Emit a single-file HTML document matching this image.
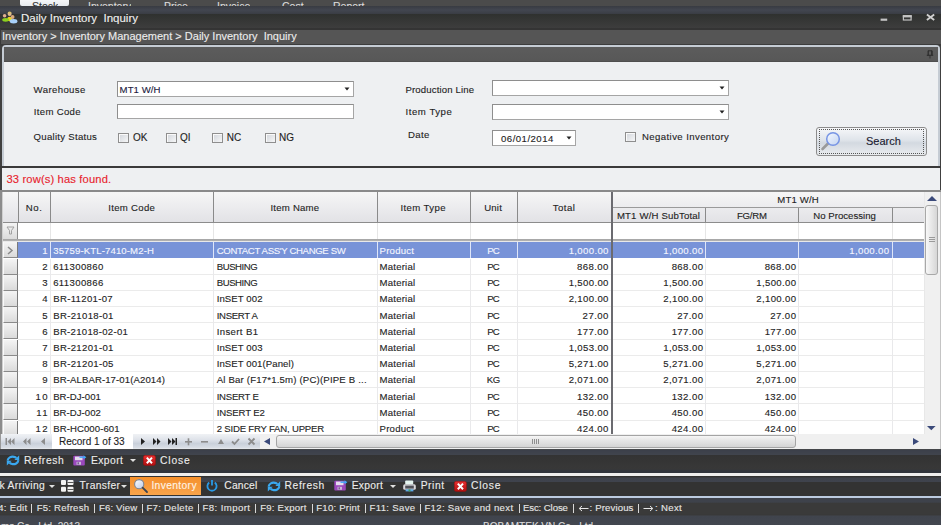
<!DOCTYPE html><html><head><meta charset="utf-8"><style>
*{margin:0;padding:0;box-sizing:border-box}
html,body{width:941px;height:525px;overflow:hidden;background:#404040;font-family:"Liberation Sans", sans-serif;}
.a{position:absolute;white-space:pre;}
.t{position:absolute;white-space:pre;line-height:1;-webkit-text-stroke:0.12px currentColor;}
</style></head><body><div class="a" style="left:0px;top:0px;width:941px;height:7px;background:#4b4b4b"></div>
<div class="a" style="left:20px;top:0px;width:49px;height:6px;background:linear-gradient(#f4f6f8,#e6eaee);border-radius:0 0 2px 2px"></div>
<div class="a" style="left:32px;top:0;height:6px;overflow:hidden"><div class="t" style="position:relative;top:1.3px;font-size:10.5px;color:#333">Stock</div></div>
<div class="a" style="left:88px;top:0;height:6px;overflow:hidden"><div class="t" style="position:relative;top:1.3px;font-size:10.5px;color:#ddd">Inventory</div></div>
<div class="a" style="left:164px;top:0;height:6px;overflow:hidden"><div class="t" style="position:relative;top:1.3px;font-size:10.5px;color:#ddd">Price</div></div>
<div class="a" style="left:217px;top:0;height:6px;overflow:hidden"><div class="t" style="position:relative;top:1.3px;font-size:10.5px;color:#ddd">Invoice</div></div>
<div class="a" style="left:282px;top:0;height:6px;overflow:hidden"><div class="t" style="position:relative;top:1.3px;font-size:10.5px;color:#ddd">Cost</div></div>
<div class="a" style="left:333px;top:0;height:6px;overflow:hidden"><div class="t" style="position:relative;top:1.3px;font-size:10.5px;color:#ddd">Report</div></div>
<div class="a" style="left:0px;top:6px;width:941px;height:8px;background:linear-gradient(#383b42,#424650 50%,#3a3d44)"></div>
<div class="a" style="left:0px;top:14px;width:941px;height:14px;background:linear-gradient(#2f312f,#3d3d3d)"></div>
<div class="a" style="left:0px;top:28px;width:941px;height:1.5px;background:#343434"></div>
<div class="t" style="left:21px;top:13px;font-size:11.5px;color:#f0f0f0;">Daily Inventory  Inquiry</div>
<svg class="a" style="left:0;top:8px" width="20" height="20" viewBox="0 0 20 20"><ellipse cx="9.8" cy="11" rx="2.6" ry="2.2" fill="#e8d020"/><circle cx="9.6" cy="6" r="2" fill="#e0b890"/><path d="M7.6 5.5a2 2 0 0 1 4 0z" fill="#d8c070"/><ellipse cx="5.6" cy="11.8" rx="3.4" ry="1.9" fill="#8cd020"/><circle cx="4.6" cy="7.8" r="1.8" fill="#e0b090"/><ellipse cx="13.6" cy="13.3" rx="3.8" ry="2.2" fill="#a8d0f8"/><circle cx="12.6" cy="9" r="1.9" fill="#d8a880"/></svg>
<svg class="a" style="left:876px;top:13px" width="65" height="14" viewBox="0 0 65 14"><rect x="4.6" y="5.6" width="6.6" height="2.2" fill="#c4c4c4"/><rect x="27.4" y="2.8" width="7.7" height="4.2" fill="none" stroke="#c4c4c4" stroke-width="1.2"/><rect x="26.8" y="2.2" width="8.9" height="2.2" fill="#c4c4c4"/><path d="M50.9 1.6 L58.2 6.9 M58.2 1.6 L50.9 6.9" stroke="#d0d0d0" stroke-width="1.9"/></svg>
<div class="a" style="left:0px;top:29.5px;width:941px;height:15px;background:#555555"></div>
<div class="a" style="left:0px;top:29px;width:1px;height:16px;background:#3a3a3a"></div>
<div class="a" style="left:0px;top:44px;width:941px;height:2px;background:#3c3c3c"></div>
<div class="t" style="left:2px;top:31px;font-size:11px;color:#ececec;">Inventory &gt; Inventory Management &gt; Daily Inventory  Inquiry</div>
<div class="a" style="left:2px;top:45.3px;width:938px;height:123px;background:#eef0f2;border:2px solid #c5ccd4;border-bottom:none;border-radius:4px 4px 0 0"></div>
<div class="a" style="left:4px;top:47.3px;width:934px;height:14.7px;background:linear-gradient(#5c5c5c,#585858 90%,#4a4a4a)"></div>
<svg class="a" style="left:926px;top:50px" width="8" height="9" viewBox="0 0 8 9"><path d="M2 0.8h4v4.2" fill="none" stroke="#2e2e2e" stroke-width="1"/><path d="M2.2 0.8v4.4" stroke="#2e2e2e" stroke-width="1.3"/><path d="M5.8 0.8v4.4" stroke="#2e2e2e" stroke-width="1.3"/><path d="M0.8 5.3h6.4" stroke="#2e2e2e" stroke-width="1.1"/><path d="M4 5.5v3" stroke="#2e2e2e" stroke-width="0.9"/></svg>
<div class="a" style="left:0px;top:166px;width:941px;height:2px;background:#3a3a3a"></div>
<div class="t" style="left:33.6px;top:84.5px;font-size:9.6px;color:#1e1e1e;letter-spacing:0.379px;">Warehouse</div>
<div class="t" style="left:33.8px;top:107px;font-size:9.6px;color:#1e1e1e;letter-spacing:0.310px;">Item Code</div>
<div class="t" style="left:33.6px;top:132.2px;font-size:9.6px;color:#1e1e1e;letter-spacing:0.275px;">Quality Status</div>
<div class="t" style="left:405.4px;top:84.5px;font-size:9.6px;color:#1e1e1e;letter-spacing:0.148px;">Production Line</div>
<div class="t" style="left:405.6px;top:107px;font-size:9.6px;color:#1e1e1e;letter-spacing:0.527px;">Item Type</div>
<div class="t" style="left:407.9px;top:130.4px;font-size:9.6px;color:#1e1e1e;letter-spacing:0.424px;">Date</div>
<div class="a" style="left:117px;top:81px;width:237px;height:16px;background:#fff;border:1px solid #a5a5a5;border-top-color:#8e8e8e;border-left-color:#8e8e8e"></div>
<div class="t" style="left:119.6px;top:84.8px;font-size:9.6px;color:#1a1a40;letter-spacing:0.071px;">MT1 W/H</div>
<svg class="a" style="left:344px;top:87px" width="6" height="4" viewBox="0 0 6 4"><path d="M0.5 0.5h5L3 3.5z" fill="#222"/></svg>
<div class="a" style="left:117px;top:104px;width:237px;height:15px;background:#fff;border:1px solid #a5a5a5;border-top-color:#8e8e8e;border-left-color:#8e8e8e"></div>
<div class="a" style="left:492px;top:80px;width:237px;height:16px;background:#fff;border:1px solid #a5a5a5;border-top-color:#8e8e8e;border-left-color:#8e8e8e"></div>
<svg class="a" style="left:719px;top:86px" width="6" height="4" viewBox="0 0 6 4"><path d="M0.5 0.5h5L3 3.5z" fill="#222"/></svg>
<div class="a" style="left:492px;top:104px;width:237px;height:16px;background:#fff;border:1px solid #a5a5a5;border-top-color:#8e8e8e;border-left-color:#8e8e8e"></div>
<svg class="a" style="left:719px;top:110px" width="6" height="4" viewBox="0 0 6 4"><path d="M0.5 0.5h5L3 3.5z" fill="#222"/></svg>
<div class="a" style="left:492px;top:130px;width:84px;height:16px;background:#fff;border:1px solid #a5a5a5;border-top-color:#8e8e8e;border-left-color:#8e8e8e"></div>
<svg class="a" style="left:566px;top:136px" width="6" height="4" viewBox="0 0 6 4"><path d="M0.5 0.5h5L3 3.5z" fill="#222"/></svg>
<div class="t" style="left:501px;top:133.6px;font-size:9.6px;color:#1e1e1e;letter-spacing:0.480px;">06/01/2014</div>
<div class="a" style="left:118px;top:133px;width:11px;height:9.5px;background:linear-gradient(135deg,#d0d4da,#f6f7f8);border:1px solid #8e8e8e;box-shadow:inset 1px 1px 0 #fafafa"></div>
<div class="t" style="left:132.9px;top:133.2px;font-size:10px;color:#1e1e1e;">OK</div>
<div class="a" style="left:165.7px;top:133.2px;width:11px;height:9.5px;background:linear-gradient(135deg,#d0d4da,#f6f7f8);border:1px solid #8e8e8e;box-shadow:inset 1px 1px 0 #fafafa"></div>
<div class="t" style="left:180.1px;top:133.39999999999998px;font-size:10px;color:#1e1e1e;">QI</div>
<div class="a" style="left:212.1px;top:133.2px;width:11px;height:9.5px;background:linear-gradient(135deg,#d0d4da,#f6f7f8);border:1px solid #8e8e8e;box-shadow:inset 1px 1px 0 #fafafa"></div>
<div class="t" style="left:226.7px;top:133.39999999999998px;font-size:10px;color:#1e1e1e;">NC</div>
<div class="a" style="left:264.5px;top:133.2px;width:11px;height:9.5px;background:linear-gradient(135deg,#d0d4da,#f6f7f8);border:1px solid #8e8e8e;box-shadow:inset 1px 1px 0 #fafafa"></div>
<div class="t" style="left:279px;top:133.39999999999998px;font-size:10px;color:#1e1e1e;">NG</div>
<div class="a" style="left:625px;top:132px;width:11px;height:9.5px;background:linear-gradient(135deg,#d0d4da,#f6f7f8);border:1px solid #8e8e8e;box-shadow:inset 1px 1px 0 #fafafa"></div>
<div class="t" style="left:642px;top:132px;font-size:9.6px;color:#1e1e1e;letter-spacing:0.400px;">Negative Inventory</div>
<div class="a" style="left:816px;top:127px;width:111px;height:29px;background:linear-gradient(#f6f7f9 0%,#dfe4ea 45%,#d3d9e0 55%,#e9ecef 100%);border:1px solid #8c8c8c;border-radius:3px"></div>
<div class="a" style="left:819px;top:129px;width:105px;height:25px;border:1px dotted #555"></div>
<svg class="a" style="left:818px;top:130px" width="26" height="22" viewBox="0 0 26 22"><defs><linearGradient id="sg" x1="0" y1="0" x2="1" y2="1"><stop offset="0" stop-color="#f4f8ff"/><stop offset="1" stop-color="#c4d4f0"/></linearGradient></defs><path d="M10.5 13 L4.5 19" stroke="#9a9a9a" stroke-width="2.6" stroke-linecap="round"/><circle cx="15" cy="9" r="6.3" fill="url(#sg)" stroke="#7794e4" stroke-width="1.5"/></svg>
<div class="t" style="left:866px;top:136px;font-size:11px;color:#1a1a30;">Search</div>
<div class="a" style="left:2px;top:168px;width:938px;height:23px;background:#eef0f2"></div>
<div class="t" style="left:6.5px;top:174px;font-size:11.2px;color:#e8222c;letter-spacing:0.138px;">33 row(s) has found.</div>
<div class="a" style="left:0px;top:191px;width:941px;height:259px;background:#fff"></div>
<div class="a" style="left:0px;top:191px;width:1.5px;height:243px;background:#8c8c8c"></div>
<div class="a" style="left:1.5px;top:191px;width:1.5px;height:243px;background:#cfcfcf"></div>
<div class="a" style="left:0px;top:190px;width:941px;height:2px;background:#8a8a8a"></div>
<div class="a" style="left:3px;top:192px;width:921px;height:30px;background:linear-gradient(#f6f6f6,#e2e2e6)"></div>
<div class="a" style="left:3px;top:222px;width:921px;height:1px;background:#8c8c8c"></div>
<div class="a" style="left:17.5px;top:192px;width:1px;height:30px;background:#8a8a8a"></div>
<div class="a" style="left:49.5px;top:192px;width:1px;height:30px;background:#8a8a8a"></div>
<div class="a" style="left:213.0px;top:192px;width:1px;height:30px;background:#8a8a8a"></div>
<div class="a" style="left:376.5px;top:192px;width:1px;height:30px;background:#8a8a8a"></div>
<div class="a" style="left:470.0px;top:192px;width:1px;height:30px;background:#8a8a8a"></div>
<div class="a" style="left:516.5px;top:192px;width:1px;height:30px;background:#8a8a8a"></div>
<div class="a" style="left:613px;top:207px;width:311px;height:1px;background:#9a9a9a"></div>
<div class="a" style="left:704.8px;top:208px;width:1px;height:14px;background:#8a8a8a"></div>
<div class="a" style="left:798.0px;top:208px;width:1px;height:14px;background:#8a8a8a"></div>
<div class="a" style="left:891.9px;top:208px;width:1px;height:14px;background:#8a8a8a"></div>
<div class="t" style="left:-65.87px;width:200px;text-align:center;top:203.2px;font-size:9.6px;color:#1e1e1e;letter-spacing:0.668px">No.</div>
<div class="t" style="left:31.74px;width:200px;text-align:center;top:203.2px;font-size:9.6px;color:#1e1e1e;letter-spacing:0.285px">Item Code</div>
<div class="t" style="left:194.91px;width:200px;text-align:center;top:203.2px;font-size:9.6px;color:#1e1e1e;letter-spacing:0.228px">Item Name</div>
<div class="t" style="left:323.20px;width:200px;text-align:center;top:203.2px;font-size:9.6px;color:#1e1e1e;letter-spacing:0.402px">Item Type</div>
<div class="t" style="left:393.10px;width:200px;text-align:center;top:203.2px;font-size:9.6px;color:#1e1e1e;letter-spacing:0.202px">Unit</div>
<div class="t" style="left:464.03px;width:200px;text-align:center;top:203.2px;font-size:9.6px;color:#1e1e1e;letter-spacing:0.467px">Total</div>
<div class="t" style="left:698.08px;width:200px;text-align:center;top:195.3px;font-size:9.6px;color:#1e1e1e;letter-spacing:0.154px">MT1 W/H</div>
<div class="t" style="left:558.48px;width:200px;text-align:center;top:210.7px;font-size:9.6px;color:#1e1e1e;letter-spacing:0.162px">MT1 W/H SubTotal</div>
<div class="t" style="left:651.89px;width:200px;text-align:center;top:210.7px;font-size:9.6px;color:#1e1e1e;letter-spacing:-0.229px">FG/RM</div>
<div class="t" style="left:744.61px;width:200px;text-align:center;top:210.7px;font-size:9.6px;color:#1e1e1e;letter-spacing:0.029px">No Processing</div>
<div class="a" style="left:3px;top:223px;width:15px;height:16px;background:linear-gradient(#f4f4f4,#dcdcdc);border-right:1px solid #8a8a8a"></div>
<div class="a" style="left:49.5px;top:223px;width:1px;height:16px;background:#e6e6e6"></div>
<div class="a" style="left:213.0px;top:223px;width:1px;height:16px;background:#e6e6e6"></div>
<div class="a" style="left:376.5px;top:223px;width:1px;height:16px;background:#e6e6e6"></div>
<div class="a" style="left:470.0px;top:223px;width:1px;height:16px;background:#e6e6e6"></div>
<div class="a" style="left:516.5px;top:223px;width:1px;height:16px;background:#e6e6e6"></div>
<div class="a" style="left:704.8px;top:223px;width:1px;height:16px;background:#e6e6e6"></div>
<div class="a" style="left:798.0px;top:223px;width:1px;height:16px;background:#e6e6e6"></div>
<div class="a" style="left:891.9px;top:223px;width:1px;height:16px;background:#e6e6e6"></div>
<svg class="a" style="left:6px;top:226px" width="9" height="9" viewBox="0 0 9 9"><path d="M1 1h7L5.5 4.5V8h-2V4.5z" fill="none" stroke="#9a9a9a" stroke-width="0.9"/></svg>
<div class="a" style="left:3px;top:239px;width:921px;height:3.3px;background:linear-gradient(#a4a4a4,#b4b4b4 70%,#e6e6e6 75%,#eeeeee)"></div>
<div class="a" style="left:0;top:242px;width:924px;height:192px;overflow:hidden">
<div class="a" style="left:18px;top:0.3px;width:906px;height:16.2px;background:#7893d8"></div>
<div class="a" style="left:3px;top:0.3px;width:15px;height:16.2px;background:linear-gradient(#f4f4f4,#dadada);border-bottom:1px solid #8a8a8a;border-right:1.3px solid #7a7a7a;border-left:1px solid #fafafa"></div>
<svg class="a" style="left:6px;top:4.3px" width="8" height="9" viewBox="0 0 8 9"><path d="M2 1l4 3.5L2 8" fill="none" stroke="#8a8a8a" stroke-width="1.5"/></svg>
<div class="a" style="left:49.5px;top:0.3px;width:1px;height:16.2px;background:#dfe6f8"></div>
<div class="a" style="left:213.0px;top:0.3px;width:1px;height:16.2px;background:#dfe6f8"></div>
<div class="a" style="left:376.5px;top:0.3px;width:1px;height:16.2px;background:#dfe6f8"></div>
<div class="a" style="left:470.0px;top:0.3px;width:1px;height:16.2px;background:#dfe6f8"></div>
<div class="a" style="left:516.5px;top:0.3px;width:1px;height:16.2px;background:#dfe6f8"></div>
<div class="a" style="left:704.8px;top:0.3px;width:1px;height:16.2px;background:#dfe6f8"></div>
<div class="a" style="left:798.0px;top:0.3px;width:1px;height:16.2px;background:#dfe6f8"></div>
<div class="a" style="left:891.9px;top:0.3px;width:1px;height:16.2px;background:#dfe6f8"></div>
<div class="t" style="left:-101.50px;width:150px;text-align:right;top:3.7px;font-size:9.6px;color:#f4f6ff;letter-spacing:1.000px">1</div>
<div class="t" style="left:53.2px;top:3.7px;font-size:9.6px;color:#f4f6ff;letter-spacing:0.115px">35759-KTL-7410-M2-H</div>
<div class="t" style="left:216.7px;top:3.7px;font-size:9.6px;color:#f4f6ff;letter-spacing:-0.342px">CONTACT ASS&#39;Y CHANGE SW</div>
<div class="t" style="left:379.6px;top:3.7px;font-size:9.6px;color:#f4f6ff;letter-spacing:0.215px">Product</div>
<div class="t" style="left:443.05px;width:100px;text-align:center;top:3.7px;font-size:9.6px;color:#f4f6ff;letter-spacing:-0.899px">PC</div>
<div class="t" style="left:458.74px;width:150px;text-align:right;top:3.7px;font-size:9.6px;color:#f4f6ff;letter-spacing:0.336px">1,000.00</div>
<div class="t" style="left:553.34px;width:150px;text-align:right;top:3.7px;font-size:9.6px;color:#f4f6ff;letter-spacing:0.336px">1,000.00</div>
<div class="t" style="left:646.00px;width:150px;text-align:right;top:3.7px;font-size:9.6px;color:#f4f6ff;letter-spacing:0.000px"></div>
<div class="t" style="left:739.34px;width:150px;text-align:right;top:3.7px;font-size:9.6px;color:#f4f6ff;letter-spacing:0.336px">1,000.00</div>
<div class="a" style="left:3px;top:16.5px;width:15px;height:16.2px;background:linear-gradient(#f4f4f4,#dadada);border-bottom:1px solid #8a8a8a;border-right:1.3px solid #7a7a7a;border-left:1px solid #fafafa"></div>
<div class="a" style="left:18px;top:31.700000000000003px;width:906px;height:1px;background:#ebebeb"></div>
<div class="a" style="left:49.5px;top:16.5px;width:1px;height:16.2px;background:#e9e9eb"></div>
<div class="a" style="left:213.0px;top:16.5px;width:1px;height:16.2px;background:#e9e9eb"></div>
<div class="a" style="left:376.5px;top:16.5px;width:1px;height:16.2px;background:#e9e9eb"></div>
<div class="a" style="left:470.0px;top:16.5px;width:1px;height:16.2px;background:#e9e9eb"></div>
<div class="a" style="left:516.5px;top:16.5px;width:1px;height:16.2px;background:#e9e9eb"></div>
<div class="a" style="left:704.8px;top:16.5px;width:1px;height:16.2px;background:#e9e9eb"></div>
<div class="a" style="left:798.0px;top:16.5px;width:1px;height:16.2px;background:#e9e9eb"></div>
<div class="a" style="left:891.9px;top:16.5px;width:1px;height:16.2px;background:#e9e9eb"></div>
<div class="t" style="left:-101.50px;width:150px;text-align:right;top:19.9px;font-size:9.6px;color:#1e1e1e;letter-spacing:1.000px">2</div>
<div class="t" style="left:53.2px;top:19.9px;font-size:9.6px;color:#1e1e1e;letter-spacing:0.347px">611300860</div>
<div class="t" style="left:216.7px;top:19.9px;font-size:9.6px;color:#1e1e1e;letter-spacing:-0.441px">BUSHING</div>
<div class="t" style="left:379.6px;top:19.9px;font-size:9.6px;color:#1e1e1e;letter-spacing:0.194px">Material</div>
<div class="t" style="left:443.05px;width:100px;text-align:center;top:19.9px;font-size:9.6px;color:#1e1e1e;letter-spacing:-0.899px">PC</div>
<div class="t" style="left:458.80px;width:150px;text-align:right;top:19.9px;font-size:9.6px;color:#1e1e1e;letter-spacing:0.403px">868.00</div>
<div class="t" style="left:553.40px;width:150px;text-align:right;top:19.9px;font-size:9.6px;color:#1e1e1e;letter-spacing:0.403px">868.00</div>
<div class="t" style="left:646.40px;width:150px;text-align:right;top:19.9px;font-size:9.6px;color:#1e1e1e;letter-spacing:0.403px">868.00</div>
<div class="t" style="left:739.00px;width:150px;text-align:right;top:19.9px;font-size:9.6px;color:#1e1e1e;letter-spacing:0.000px"></div>
<div class="a" style="left:3px;top:32.7px;width:15px;height:16.2px;background:linear-gradient(#f4f4f4,#dadada);border-bottom:1px solid #8a8a8a;border-right:1.3px solid #7a7a7a;border-left:1px solid #fafafa"></div>
<div class="a" style="left:18px;top:47.900000000000006px;width:906px;height:1px;background:#ebebeb"></div>
<div class="a" style="left:49.5px;top:32.7px;width:1px;height:16.2px;background:#e9e9eb"></div>
<div class="a" style="left:213.0px;top:32.7px;width:1px;height:16.2px;background:#e9e9eb"></div>
<div class="a" style="left:376.5px;top:32.7px;width:1px;height:16.2px;background:#e9e9eb"></div>
<div class="a" style="left:470.0px;top:32.7px;width:1px;height:16.2px;background:#e9e9eb"></div>
<div class="a" style="left:516.5px;top:32.7px;width:1px;height:16.2px;background:#e9e9eb"></div>
<div class="a" style="left:704.8px;top:32.7px;width:1px;height:16.2px;background:#e9e9eb"></div>
<div class="a" style="left:798.0px;top:32.7px;width:1px;height:16.2px;background:#e9e9eb"></div>
<div class="a" style="left:891.9px;top:32.7px;width:1px;height:16.2px;background:#e9e9eb"></div>
<div class="t" style="left:-101.50px;width:150px;text-align:right;top:36.1px;font-size:9.6px;color:#1e1e1e;letter-spacing:1.000px">3</div>
<div class="t" style="left:53.2px;top:36.1px;font-size:9.6px;color:#1e1e1e;letter-spacing:0.347px">611300866</div>
<div class="t" style="left:216.7px;top:36.1px;font-size:9.6px;color:#1e1e1e;letter-spacing:-0.441px">BUSHING</div>
<div class="t" style="left:379.6px;top:36.1px;font-size:9.6px;color:#1e1e1e;letter-spacing:0.194px">Material</div>
<div class="t" style="left:443.05px;width:100px;text-align:center;top:36.1px;font-size:9.6px;color:#1e1e1e;letter-spacing:-0.899px">PC</div>
<div class="t" style="left:458.74px;width:150px;text-align:right;top:36.1px;font-size:9.6px;color:#1e1e1e;letter-spacing:0.336px">1,500.00</div>
<div class="t" style="left:553.34px;width:150px;text-align:right;top:36.1px;font-size:9.6px;color:#1e1e1e;letter-spacing:0.336px">1,500.00</div>
<div class="t" style="left:646.34px;width:150px;text-align:right;top:36.1px;font-size:9.6px;color:#1e1e1e;letter-spacing:0.336px">1,500.00</div>
<div class="t" style="left:739.00px;width:150px;text-align:right;top:36.1px;font-size:9.6px;color:#1e1e1e;letter-spacing:0.000px"></div>
<div class="a" style="left:3px;top:48.9px;width:15px;height:16.2px;background:linear-gradient(#f4f4f4,#dadada);border-bottom:1px solid #8a8a8a;border-right:1.3px solid #7a7a7a;border-left:1px solid #fafafa"></div>
<div class="a" style="left:18px;top:64.1px;width:906px;height:1px;background:#ebebeb"></div>
<div class="a" style="left:49.5px;top:48.9px;width:1px;height:16.2px;background:#e9e9eb"></div>
<div class="a" style="left:213.0px;top:48.9px;width:1px;height:16.2px;background:#e9e9eb"></div>
<div class="a" style="left:376.5px;top:48.9px;width:1px;height:16.2px;background:#e9e9eb"></div>
<div class="a" style="left:470.0px;top:48.9px;width:1px;height:16.2px;background:#e9e9eb"></div>
<div class="a" style="left:516.5px;top:48.9px;width:1px;height:16.2px;background:#e9e9eb"></div>
<div class="a" style="left:704.8px;top:48.9px;width:1px;height:16.2px;background:#e9e9eb"></div>
<div class="a" style="left:798.0px;top:48.9px;width:1px;height:16.2px;background:#e9e9eb"></div>
<div class="a" style="left:891.9px;top:48.9px;width:1px;height:16.2px;background:#e9e9eb"></div>
<div class="t" style="left:-102.50px;width:150px;text-align:right;top:52.3px;font-size:9.6px;color:#1e1e1e;letter-spacing:0.000px">4</div>
<div class="t" style="left:53.2px;top:52.3px;font-size:9.6px;color:#1e1e1e;letter-spacing:0.316px">BR-11201-07</div>
<div class="t" style="left:216.7px;top:52.3px;font-size:9.6px;color:#1e1e1e;letter-spacing:0.088px">InSET 002</div>
<div class="t" style="left:379.6px;top:52.3px;font-size:9.6px;color:#1e1e1e;letter-spacing:0.194px">Material</div>
<div class="t" style="left:443.05px;width:100px;text-align:center;top:52.3px;font-size:9.6px;color:#1e1e1e;letter-spacing:-0.899px">PC</div>
<div class="t" style="left:458.74px;width:150px;text-align:right;top:52.3px;font-size:9.6px;color:#1e1e1e;letter-spacing:0.336px">2,100.00</div>
<div class="t" style="left:553.34px;width:150px;text-align:right;top:52.3px;font-size:9.6px;color:#1e1e1e;letter-spacing:0.336px">2,100.00</div>
<div class="t" style="left:646.34px;width:150px;text-align:right;top:52.3px;font-size:9.6px;color:#1e1e1e;letter-spacing:0.336px">2,100.00</div>
<div class="t" style="left:739.00px;width:150px;text-align:right;top:52.3px;font-size:9.6px;color:#1e1e1e;letter-spacing:0.000px"></div>
<div class="a" style="left:3px;top:65.1px;width:15px;height:16.2px;background:linear-gradient(#f4f4f4,#dadada);border-bottom:1px solid #8a8a8a;border-right:1.3px solid #7a7a7a;border-left:1px solid #fafafa"></div>
<div class="a" style="left:18px;top:80.3px;width:906px;height:1px;background:#ebebeb"></div>
<div class="a" style="left:49.5px;top:65.1px;width:1px;height:16.2px;background:#e9e9eb"></div>
<div class="a" style="left:213.0px;top:65.1px;width:1px;height:16.2px;background:#e9e9eb"></div>
<div class="a" style="left:376.5px;top:65.1px;width:1px;height:16.2px;background:#e9e9eb"></div>
<div class="a" style="left:470.0px;top:65.1px;width:1px;height:16.2px;background:#e9e9eb"></div>
<div class="a" style="left:516.5px;top:65.1px;width:1px;height:16.2px;background:#e9e9eb"></div>
<div class="a" style="left:704.8px;top:65.1px;width:1px;height:16.2px;background:#e9e9eb"></div>
<div class="a" style="left:798.0px;top:65.1px;width:1px;height:16.2px;background:#e9e9eb"></div>
<div class="a" style="left:891.9px;top:65.1px;width:1px;height:16.2px;background:#e9e9eb"></div>
<div class="t" style="left:-101.50px;width:150px;text-align:right;top:68.5px;font-size:9.6px;color:#1e1e1e;letter-spacing:1.000px">5</div>
<div class="t" style="left:53.2px;top:68.5px;font-size:9.6px;color:#1e1e1e;letter-spacing:0.319px">BR-21018-01</div>
<div class="t" style="left:216.7px;top:68.5px;font-size:9.6px;color:#1e1e1e;letter-spacing:-0.310px">INSERT A</div>
<div class="t" style="left:379.6px;top:68.5px;font-size:9.6px;color:#1e1e1e;letter-spacing:0.194px">Material</div>
<div class="t" style="left:443.05px;width:100px;text-align:center;top:68.5px;font-size:9.6px;color:#1e1e1e;letter-spacing:-0.899px">PC</div>
<div class="t" style="left:458.85px;width:150px;text-align:right;top:68.5px;font-size:9.6px;color:#1e1e1e;letter-spacing:0.448px">27.00</div>
<div class="t" style="left:553.45px;width:150px;text-align:right;top:68.5px;font-size:9.6px;color:#1e1e1e;letter-spacing:0.448px">27.00</div>
<div class="t" style="left:646.45px;width:150px;text-align:right;top:68.5px;font-size:9.6px;color:#1e1e1e;letter-spacing:0.448px">27.00</div>
<div class="t" style="left:739.00px;width:150px;text-align:right;top:68.5px;font-size:9.6px;color:#1e1e1e;letter-spacing:0.000px"></div>
<div class="a" style="left:3px;top:81.3px;width:15px;height:16.2px;background:linear-gradient(#f4f4f4,#dadada);border-bottom:1px solid #8a8a8a;border-right:1.3px solid #7a7a7a;border-left:1px solid #fafafa"></div>
<div class="a" style="left:18px;top:96.5px;width:906px;height:1px;background:#ebebeb"></div>
<div class="a" style="left:49.5px;top:81.3px;width:1px;height:16.2px;background:#e9e9eb"></div>
<div class="a" style="left:213.0px;top:81.3px;width:1px;height:16.2px;background:#e9e9eb"></div>
<div class="a" style="left:376.5px;top:81.3px;width:1px;height:16.2px;background:#e9e9eb"></div>
<div class="a" style="left:470.0px;top:81.3px;width:1px;height:16.2px;background:#e9e9eb"></div>
<div class="a" style="left:516.5px;top:81.3px;width:1px;height:16.2px;background:#e9e9eb"></div>
<div class="a" style="left:704.8px;top:81.3px;width:1px;height:16.2px;background:#e9e9eb"></div>
<div class="a" style="left:798.0px;top:81.3px;width:1px;height:16.2px;background:#e9e9eb"></div>
<div class="a" style="left:891.9px;top:81.3px;width:1px;height:16.2px;background:#e9e9eb"></div>
<div class="t" style="left:-101.50px;width:150px;text-align:right;top:84.7px;font-size:9.6px;color:#1e1e1e;letter-spacing:1.000px">6</div>
<div class="t" style="left:53.2px;top:84.7px;font-size:9.6px;color:#1e1e1e;letter-spacing:0.291px">BR-21018-02-01</div>
<div class="t" style="left:216.7px;top:84.7px;font-size:9.6px;color:#1e1e1e;letter-spacing:0.368px">Insert B1</div>
<div class="t" style="left:379.6px;top:84.7px;font-size:9.6px;color:#1e1e1e;letter-spacing:0.194px">Material</div>
<div class="t" style="left:443.05px;width:100px;text-align:center;top:84.7px;font-size:9.6px;color:#1e1e1e;letter-spacing:-0.899px">PC</div>
<div class="t" style="left:458.80px;width:150px;text-align:right;top:84.7px;font-size:9.6px;color:#1e1e1e;letter-spacing:0.403px">177.00</div>
<div class="t" style="left:553.40px;width:150px;text-align:right;top:84.7px;font-size:9.6px;color:#1e1e1e;letter-spacing:0.403px">177.00</div>
<div class="t" style="left:646.40px;width:150px;text-align:right;top:84.7px;font-size:9.6px;color:#1e1e1e;letter-spacing:0.403px">177.00</div>
<div class="t" style="left:739.00px;width:150px;text-align:right;top:84.7px;font-size:9.6px;color:#1e1e1e;letter-spacing:0.000px"></div>
<div class="a" style="left:3px;top:97.5px;width:15px;height:16.2px;background:linear-gradient(#f4f4f4,#dadada);border-bottom:1px solid #8a8a8a;border-right:1.3px solid #7a7a7a;border-left:1px solid #fafafa"></div>
<div class="a" style="left:18px;top:112.7px;width:906px;height:1px;background:#ebebeb"></div>
<div class="a" style="left:49.5px;top:97.5px;width:1px;height:16.2px;background:#e9e9eb"></div>
<div class="a" style="left:213.0px;top:97.5px;width:1px;height:16.2px;background:#e9e9eb"></div>
<div class="a" style="left:376.5px;top:97.5px;width:1px;height:16.2px;background:#e9e9eb"></div>
<div class="a" style="left:470.0px;top:97.5px;width:1px;height:16.2px;background:#e9e9eb"></div>
<div class="a" style="left:516.5px;top:97.5px;width:1px;height:16.2px;background:#e9e9eb"></div>
<div class="a" style="left:704.8px;top:97.5px;width:1px;height:16.2px;background:#e9e9eb"></div>
<div class="a" style="left:798.0px;top:97.5px;width:1px;height:16.2px;background:#e9e9eb"></div>
<div class="a" style="left:891.9px;top:97.5px;width:1px;height:16.2px;background:#e9e9eb"></div>
<div class="t" style="left:-101.50px;width:150px;text-align:right;top:100.9px;font-size:9.6px;color:#1e1e1e;letter-spacing:1.000px">7</div>
<div class="t" style="left:53.2px;top:100.9px;font-size:9.6px;color:#1e1e1e;letter-spacing:0.319px">BR-21201-01</div>
<div class="t" style="left:216.7px;top:100.9px;font-size:9.6px;color:#1e1e1e;letter-spacing:0.088px">InSET 003</div>
<div class="t" style="left:379.6px;top:100.9px;font-size:9.6px;color:#1e1e1e;letter-spacing:0.194px">Material</div>
<div class="t" style="left:443.05px;width:100px;text-align:center;top:100.9px;font-size:9.6px;color:#1e1e1e;letter-spacing:-0.899px">PC</div>
<div class="t" style="left:458.74px;width:150px;text-align:right;top:100.9px;font-size:9.6px;color:#1e1e1e;letter-spacing:0.336px">1,053.00</div>
<div class="t" style="left:553.34px;width:150px;text-align:right;top:100.9px;font-size:9.6px;color:#1e1e1e;letter-spacing:0.336px">1,053.00</div>
<div class="t" style="left:646.34px;width:150px;text-align:right;top:100.9px;font-size:9.6px;color:#1e1e1e;letter-spacing:0.336px">1,053.00</div>
<div class="t" style="left:739.00px;width:150px;text-align:right;top:100.9px;font-size:9.6px;color:#1e1e1e;letter-spacing:0.000px"></div>
<div class="a" style="left:3px;top:113.7px;width:15px;height:16.2px;background:linear-gradient(#f4f4f4,#dadada);border-bottom:1px solid #8a8a8a;border-right:1.3px solid #7a7a7a;border-left:1px solid #fafafa"></div>
<div class="a" style="left:18px;top:128.9px;width:906px;height:1px;background:#ebebeb"></div>
<div class="a" style="left:49.5px;top:113.7px;width:1px;height:16.2px;background:#e9e9eb"></div>
<div class="a" style="left:213.0px;top:113.7px;width:1px;height:16.2px;background:#e9e9eb"></div>
<div class="a" style="left:376.5px;top:113.7px;width:1px;height:16.2px;background:#e9e9eb"></div>
<div class="a" style="left:470.0px;top:113.7px;width:1px;height:16.2px;background:#e9e9eb"></div>
<div class="a" style="left:516.5px;top:113.7px;width:1px;height:16.2px;background:#e9e9eb"></div>
<div class="a" style="left:704.8px;top:113.7px;width:1px;height:16.2px;background:#e9e9eb"></div>
<div class="a" style="left:798.0px;top:113.7px;width:1px;height:16.2px;background:#e9e9eb"></div>
<div class="a" style="left:891.9px;top:113.7px;width:1px;height:16.2px;background:#e9e9eb"></div>
<div class="t" style="left:-101.50px;width:150px;text-align:right;top:117.1px;font-size:9.6px;color:#1e1e1e;letter-spacing:1.000px">8</div>
<div class="t" style="left:53.2px;top:117.1px;font-size:9.6px;color:#1e1e1e;letter-spacing:0.319px">BR-21201-05</div>
<div class="t" style="left:216.7px;top:117.1px;font-size:9.6px;color:#1e1e1e;letter-spacing:0.076px">InSET 001(Panel)</div>
<div class="t" style="left:379.6px;top:117.1px;font-size:9.6px;color:#1e1e1e;letter-spacing:0.194px">Material</div>
<div class="t" style="left:443.05px;width:100px;text-align:center;top:117.1px;font-size:9.6px;color:#1e1e1e;letter-spacing:-0.899px">PC</div>
<div class="t" style="left:458.74px;width:150px;text-align:right;top:117.1px;font-size:9.6px;color:#1e1e1e;letter-spacing:0.336px">5,271.00</div>
<div class="t" style="left:553.34px;width:150px;text-align:right;top:117.1px;font-size:9.6px;color:#1e1e1e;letter-spacing:0.336px">5,271.00</div>
<div class="t" style="left:646.34px;width:150px;text-align:right;top:117.1px;font-size:9.6px;color:#1e1e1e;letter-spacing:0.336px">5,271.00</div>
<div class="t" style="left:739.00px;width:150px;text-align:right;top:117.1px;font-size:9.6px;color:#1e1e1e;letter-spacing:0.000px"></div>
<div class="a" style="left:3px;top:129.9px;width:15px;height:16.2px;background:linear-gradient(#f4f4f4,#dadada);border-bottom:1px solid #8a8a8a;border-right:1.3px solid #7a7a7a;border-left:1px solid #fafafa"></div>
<div class="a" style="left:18px;top:145.1px;width:906px;height:1px;background:#ebebeb"></div>
<div class="a" style="left:49.5px;top:129.9px;width:1px;height:16.2px;background:#e9e9eb"></div>
<div class="a" style="left:213.0px;top:129.9px;width:1px;height:16.2px;background:#e9e9eb"></div>
<div class="a" style="left:376.5px;top:129.9px;width:1px;height:16.2px;background:#e9e9eb"></div>
<div class="a" style="left:470.0px;top:129.9px;width:1px;height:16.2px;background:#e9e9eb"></div>
<div class="a" style="left:516.5px;top:129.9px;width:1px;height:16.2px;background:#e9e9eb"></div>
<div class="a" style="left:704.8px;top:129.9px;width:1px;height:16.2px;background:#e9e9eb"></div>
<div class="a" style="left:798.0px;top:129.9px;width:1px;height:16.2px;background:#e9e9eb"></div>
<div class="a" style="left:891.9px;top:129.9px;width:1px;height:16.2px;background:#e9e9eb"></div>
<div class="t" style="left:-101.50px;width:150px;text-align:right;top:133.3px;font-size:9.6px;color:#1e1e1e;letter-spacing:1.000px">9</div>
<div class="t" style="left:53.2px;top:133.3px;font-size:9.6px;color:#1e1e1e;letter-spacing:0.092px">BR-ALBAR-17-01(A2014)</div>
<div class="t" style="left:216.7px;top:133.3px;font-size:9.6px;color:#1e1e1e;letter-spacing:0.187px">Al Bar (F17*1.5m) (PC)(PIPE B ...</div>
<div class="t" style="left:379.6px;top:133.3px;font-size:9.6px;color:#1e1e1e;letter-spacing:0.194px">Material</div>
<div class="t" style="left:443.30px;width:100px;text-align:center;top:133.3px;font-size:9.6px;color:#1e1e1e;letter-spacing:-0.399px">KG</div>
<div class="t" style="left:458.74px;width:150px;text-align:right;top:133.3px;font-size:9.6px;color:#1e1e1e;letter-spacing:0.336px">2,071.00</div>
<div class="t" style="left:553.34px;width:150px;text-align:right;top:133.3px;font-size:9.6px;color:#1e1e1e;letter-spacing:0.336px">2,071.00</div>
<div class="t" style="left:646.34px;width:150px;text-align:right;top:133.3px;font-size:9.6px;color:#1e1e1e;letter-spacing:0.336px">2,071.00</div>
<div class="t" style="left:739.00px;width:150px;text-align:right;top:133.3px;font-size:9.6px;color:#1e1e1e;letter-spacing:0.000px"></div>
<div class="a" style="left:3px;top:146.1px;width:15px;height:16.2px;background:linear-gradient(#f4f4f4,#dadada);border-bottom:1px solid #8a8a8a;border-right:1.3px solid #7a7a7a;border-left:1px solid #fafafa"></div>
<div class="a" style="left:18px;top:161.29999999999998px;width:906px;height:1px;background:#ebebeb"></div>
<div class="a" style="left:49.5px;top:146.1px;width:1px;height:16.2px;background:#e9e9eb"></div>
<div class="a" style="left:213.0px;top:146.1px;width:1px;height:16.2px;background:#e9e9eb"></div>
<div class="a" style="left:376.5px;top:146.1px;width:1px;height:16.2px;background:#e9e9eb"></div>
<div class="a" style="left:470.0px;top:146.1px;width:1px;height:16.2px;background:#e9e9eb"></div>
<div class="a" style="left:516.5px;top:146.1px;width:1px;height:16.2px;background:#e9e9eb"></div>
<div class="a" style="left:704.8px;top:146.1px;width:1px;height:16.2px;background:#e9e9eb"></div>
<div class="a" style="left:798.0px;top:146.1px;width:1px;height:16.2px;background:#e9e9eb"></div>
<div class="a" style="left:891.9px;top:146.1px;width:1px;height:16.2px;background:#e9e9eb"></div>
<div class="t" style="left:-101.27px;width:150px;text-align:right;top:149.5px;font-size:9.6px;color:#1e1e1e;letter-spacing:1.226px">10</div>
<div class="t" style="left:53.2px;top:149.5px;font-size:9.6px;color:#1e1e1e;letter-spacing:0.036px">BR-DJ-001</div>
<div class="t" style="left:216.7px;top:149.5px;font-size:9.6px;color:#1e1e1e;letter-spacing:-0.253px">INSERT E</div>
<div class="t" style="left:379.6px;top:149.5px;font-size:9.6px;color:#1e1e1e;letter-spacing:0.194px">Material</div>
<div class="t" style="left:443.05px;width:100px;text-align:center;top:149.5px;font-size:9.6px;color:#1e1e1e;letter-spacing:-0.899px">PC</div>
<div class="t" style="left:458.80px;width:150px;text-align:right;top:149.5px;font-size:9.6px;color:#1e1e1e;letter-spacing:0.403px">132.00</div>
<div class="t" style="left:553.40px;width:150px;text-align:right;top:149.5px;font-size:9.6px;color:#1e1e1e;letter-spacing:0.403px">132.00</div>
<div class="t" style="left:646.40px;width:150px;text-align:right;top:149.5px;font-size:9.6px;color:#1e1e1e;letter-spacing:0.403px">132.00</div>
<div class="t" style="left:739.00px;width:150px;text-align:right;top:149.5px;font-size:9.6px;color:#1e1e1e;letter-spacing:0.000px"></div>
<div class="a" style="left:3px;top:162.3px;width:15px;height:16.2px;background:linear-gradient(#f4f4f4,#dadada);border-bottom:1px solid #8a8a8a;border-right:1.3px solid #7a7a7a;border-left:1px solid #fafafa"></div>
<div class="a" style="left:18px;top:177.5px;width:906px;height:1px;background:#ebebeb"></div>
<div class="a" style="left:49.5px;top:162.3px;width:1px;height:16.2px;background:#e9e9eb"></div>
<div class="a" style="left:213.0px;top:162.3px;width:1px;height:16.2px;background:#e9e9eb"></div>
<div class="a" style="left:376.5px;top:162.3px;width:1px;height:16.2px;background:#e9e9eb"></div>
<div class="a" style="left:470.0px;top:162.3px;width:1px;height:16.2px;background:#e9e9eb"></div>
<div class="a" style="left:516.5px;top:162.3px;width:1px;height:16.2px;background:#e9e9eb"></div>
<div class="a" style="left:704.8px;top:162.3px;width:1px;height:16.2px;background:#e9e9eb"></div>
<div class="a" style="left:798.0px;top:162.3px;width:1px;height:16.2px;background:#e9e9eb"></div>
<div class="a" style="left:891.9px;top:162.3px;width:1px;height:16.2px;background:#e9e9eb"></div>
<div class="t" style="left:-101.30px;width:150px;text-align:right;top:165.7px;font-size:9.6px;color:#1e1e1e;letter-spacing:1.196px">11</div>
<div class="t" style="left:53.2px;top:165.7px;font-size:9.6px;color:#1e1e1e;letter-spacing:0.036px">BR-DJ-002</div>
<div class="t" style="left:216.7px;top:165.7px;font-size:9.6px;color:#1e1e1e;letter-spacing:-0.134px">INSERT E2</div>
<div class="t" style="left:379.6px;top:165.7px;font-size:9.6px;color:#1e1e1e;letter-spacing:0.194px">Material</div>
<div class="t" style="left:443.05px;width:100px;text-align:center;top:165.7px;font-size:9.6px;color:#1e1e1e;letter-spacing:-0.899px">PC</div>
<div class="t" style="left:458.80px;width:150px;text-align:right;top:165.7px;font-size:9.6px;color:#1e1e1e;letter-spacing:0.403px">450.00</div>
<div class="t" style="left:553.40px;width:150px;text-align:right;top:165.7px;font-size:9.6px;color:#1e1e1e;letter-spacing:0.403px">450.00</div>
<div class="t" style="left:646.40px;width:150px;text-align:right;top:165.7px;font-size:9.6px;color:#1e1e1e;letter-spacing:0.403px">450.00</div>
<div class="t" style="left:739.00px;width:150px;text-align:right;top:165.7px;font-size:9.6px;color:#1e1e1e;letter-spacing:0.000px"></div>
<div class="a" style="left:3px;top:178.5px;width:15px;height:16.2px;background:linear-gradient(#f4f4f4,#dadada);border-bottom:1px solid #8a8a8a;border-right:1.3px solid #7a7a7a;border-left:1px solid #fafafa"></div>
<div class="a" style="left:18px;top:193.7px;width:906px;height:1px;background:#ebebeb"></div>
<div class="a" style="left:49.5px;top:178.5px;width:1px;height:16.2px;background:#e9e9eb"></div>
<div class="a" style="left:213.0px;top:178.5px;width:1px;height:16.2px;background:#e9e9eb"></div>
<div class="a" style="left:376.5px;top:178.5px;width:1px;height:16.2px;background:#e9e9eb"></div>
<div class="a" style="left:470.0px;top:178.5px;width:1px;height:16.2px;background:#e9e9eb"></div>
<div class="a" style="left:516.5px;top:178.5px;width:1px;height:16.2px;background:#e9e9eb"></div>
<div class="a" style="left:704.8px;top:178.5px;width:1px;height:16.2px;background:#e9e9eb"></div>
<div class="a" style="left:798.0px;top:178.5px;width:1px;height:16.2px;background:#e9e9eb"></div>
<div class="a" style="left:891.9px;top:178.5px;width:1px;height:16.2px;background:#e9e9eb"></div>
<div class="t" style="left:-101.27px;width:150px;text-align:right;top:181.9px;font-size:9.6px;color:#1e1e1e;letter-spacing:1.226px">12</div>
<div class="t" style="left:53.2px;top:181.9px;font-size:9.6px;color:#1e1e1e;letter-spacing:0.077px">BR-HC000-601</div>
<div class="t" style="left:216.7px;top:181.9px;font-size:9.6px;color:#1e1e1e;letter-spacing:-0.208px">2 SIDE FRY FAN, UPPER</div>
<div class="t" style="left:379.6px;top:181.9px;font-size:9.6px;color:#1e1e1e;letter-spacing:0.215px">Product</div>
<div class="t" style="left:443.05px;width:100px;text-align:center;top:181.9px;font-size:9.6px;color:#1e1e1e;letter-spacing:-0.899px">PC</div>
<div class="t" style="left:458.80px;width:150px;text-align:right;top:181.9px;font-size:9.6px;color:#1e1e1e;letter-spacing:0.403px">424.00</div>
<div class="t" style="left:553.40px;width:150px;text-align:right;top:181.9px;font-size:9.6px;color:#1e1e1e;letter-spacing:0.403px">424.00</div>
<div class="t" style="left:646.40px;width:150px;text-align:right;top:181.9px;font-size:9.6px;color:#1e1e1e;letter-spacing:0.403px">424.00</div>
<div class="t" style="left:739.00px;width:150px;text-align:right;top:181.9px;font-size:9.6px;color:#1e1e1e;letter-spacing:0.000px"></div>
</div>
<div class="a" style="left:610.8px;top:192px;width:2.4px;height:242px;background:#6b6b70"></div>
<div class="a" style="left:924px;top:192px;width:16px;height:242px;background:#f0f0f0;border-left:1px solid #e8e8e8"></div>
<svg class="a" style="left:927px;top:196px" width="10" height="5" viewBox="0 0 10 5"><path d="M0 5L5 0L10 5z" fill="#3b4a7a"/></svg>
<div class="a" style="left:925px;top:205px;width:13px;height:70px;background:linear-gradient(90deg,#f8f8f8,#e4e4e4 60%,#d6d6d6);border:1px solid #a8a8a8;border-radius:3px"></div>
<div class="a" style="left:929px;top:237px;width:6px;height:1px;background:#9a9a9a"></div>
<div class="a" style="left:929px;top:239px;width:6px;height:1px;background:#9a9a9a"></div>
<div class="a" style="left:929px;top:241px;width:6px;height:1px;background:#9a9a9a"></div>
<svg class="a" style="left:927.3px;top:425.9px" width="9" height="5" viewBox="0 0 9 5"><path d="M0 0L8.6 0L4.3 4.3z" fill="#3b4a7a"/></svg>
<div class="a" style="left:939.7px;top:192px;width:1.3px;height:257px;background:#c4c4c4"></div>
<div class="a" style="left:1px;top:434px;width:259px;height:16px;background:linear-gradient(#f0f2f5 0%,#dfe3ea 35%,#c9d0da 60%,#d8dde4 85%,#f4f5f7 100%)"></div>
<div class="a" style="left:0px;top:434px;width:1px;height:16px;background:#9a9a9a"></div>
<div class="a" style="left:52px;top:434px;width:81px;height:15.8px;background:#fff"></div>
<div class="t" style="left:59px;top:437px;font-size:10px;color:#1e1e1e;">Record 1 of 33</div>
<svg class="a" style="left:0;top:434px" width="262" height="15" viewBox="0 0 262 15">
<g fill="#8c8c8c">
<rect x="5.5" y="4" width="1.5" height="7"/><path d="M7.5 7.5L11 4V11z M11 7.5L14.5 4V11z"/>
<path d="M23 7.5L26.5 4V11z M27 7.5L30.5 4V11z"/>
<path d="M41 7.5L45 4V11z"/>
</g>
<g fill="#222">
<path d="M141 4L145 7.5L141 11z"/>
<path d="M153 4L156.5 7.5L153 11z M157 4L160.5 7.5L157 11z"/>
<path d="M168 4L171.5 7.5L168 11z M172 4L175.5 7.5L172 11z"/><rect x="175.5" y="4" width="1.5" height="7"/>
</g>
<g fill="#8c8c8c">
<rect x="185" y="7" width="7" height="1.6"/><rect x="187.7" y="4.3" width="1.6" height="7"/>
<rect x="201" y="7" width="7" height="1.6"/>
<path d="M218 10L221 5L224 10z"/>
</g>
<path d="M232 7.5l2.5 2.5L239 5" fill="none" stroke="#8c8c8c" stroke-width="1.8"/>
<path d="M248.5 4.5l6 6M254.5 4.5l-6 6" fill="none" stroke="#8c8c8c" stroke-width="1.8"/>
</svg>
<div class="a" style="left:260px;top:434px;width:664px;height:15.8px;background:#f0f0f0"></div>
<svg class="a" style="left:264px;top:438px" width="6" height="7" viewBox="0 0 6 7"><path d="M6 0V7L0 3.5z" fill="#3b4a7a"/></svg>
<div class="a" style="left:276px;top:435px;width:520px;height:12.6px;background:linear-gradient(#f6f6f6,#e6e6e6 40%,#d4d4d4);border:1px solid #a4a4a4;border-radius:3px"></div>
<div class="a" style="left:532.0px;top:439px;width:1.1px;height:5px;background:#8e8e8e"></div>
<div class="a" style="left:534.1px;top:439px;width:1.1px;height:5px;background:#8e8e8e"></div>
<div class="a" style="left:536.2px;top:439px;width:1.1px;height:5px;background:#8e8e8e"></div>
<div class="a" style="left:538.3px;top:439px;width:1.1px;height:5px;background:#8e8e8e"></div>
<svg class="a" style="left:913px;top:438px" width="6" height="7" viewBox="0 0 6 7"><path d="M0 0V7L6 3.5z" fill="#3b4a7a"/></svg>
<div class="a" style="left:924px;top:434px;width:16px;height:15.8px;background:#f0f0f0"></div>
<div class="a" style="left:0px;top:449px;width:941px;height:24px;background:linear-gradient(#4a4a4a 0,#3c404a 1.5px,#40444d 5.5px,#333 6.5px,#383838 20px,#30343c 22px)"></div>
<div class="a" style="left:0px;top:473px;width:941px;height:3px;background:#eeeeee"></div>
<svg class="a" style="left:5.5px;top:455px" width="14" height="11" viewBox="0 0 14 11"><g fill="none" stroke="#3aa8f0" stroke-width="2.2"><path d="M1.6 5.6C2 2.6 5 1.2 8 1.8C9 2 9.8 2.4 10.4 3"/><path d="M12.4 5.2C12 8.2 9 9.6 6 9C5 8.8 4.2 8.4 3.6 7.8"/></g><path d="M13.2 0.2V5H8.4z" fill="#3aa8f0"/><path d="M0.8 10.6V5.8H5.6z" fill="#3aa8f0"/></svg>
<div class="t" style="left:24px;top:455.5px;font-size:10.3px;color:#ececec;letter-spacing:0.612px;">Refresh</div>
<svg class="a" style="left:73.4px;top:455.2px" width="14" height="11" viewBox="0 0 14 11"><rect x="0.3" y="0.8" width="11.5" height="9.8" rx="1" fill="#9a48bc"/><rect x="2" y="1.6" width="7.5" height="3.6" fill="#e4dcee"/><rect x="3.5" y="6.8" width="4.5" height="3" fill="#c8b8d8"/><rect x="4.5" y="7.3" width="1.5" height="2" fill="#7a5a90"/><path d="M6.5 2.2h5.5" stroke="#40a8f8" stroke-width="1.4"/><path d="M10.6 0.2L13.4 2.2L10.6 4.2z" fill="#40a8f8"/></svg>
<div class="t" style="left:91px;top:455.5px;font-size:10.3px;color:#ececec;letter-spacing:0.420px;">Export</div>
<svg class="a" style="left:130px;top:459px" width="6" height="4" viewBox="0 0 6 4"><path d="M0 0h6L3 3z" fill="#e0e0e0"/></svg>
<svg class="a" style="left:142.8px;top:455.2px" width="13" height="11" viewBox="0 0 13 11"><defs><linearGradient id="rg142.8" x1="0" y1="0" x2="0" y2="1"><stop offset="0" stop-color="#e83030"/><stop offset="1" stop-color="#b01010"/></linearGradient></defs><rect x="0.3" y="0.3" width="12.2" height="10.2" rx="2" fill="url(#rg142.8)" stroke="#901010" stroke-width="0.6"/><path d="M3.8 2.6l5.2 5.6M9 2.6L3.8 8.2" stroke="#fff" stroke-width="2"/></svg>
<div class="t" style="left:160px;top:455.5px;font-size:10.3px;color:#ececec;letter-spacing:0.850px;">Close</div>
<div class="a" style="left:0px;top:475.8px;width:941px;height:20.5px;background:linear-gradient(#303030 0,#343434 1.2px,#3e424c 1.8px,#3f434d 5.8px,#333 6.5px,#333 100%)"></div>
<div class="a" style="left:0px;top:496px;width:941px;height:2px;background:#bccbe0"></div>
<div class="t" style="left:-0.5px;top:480.8px;font-size:10.3px;color:#ececec;letter-spacing:0.313px;">k Arriving</div>
<svg class="a" style="left:49px;top:485px" width="6" height="4" viewBox="0 0 6 4"><path d="M0 0h6L3 3z" fill="#e0e0e0"/></svg>
<svg class="a" style="left:61px;top:480px" width="13" height="13" viewBox="0 0 13 13"><g fill="#f2f2f2"><rect x="0" y="0" width="5" height="5" rx="1"/><rect x="0" y="6.8" width="5" height="5" rx="1"/><rect x="6.5" y="0" width="6" height="5" rx="1"/><rect x="6.5" y="6.8" width="6" height="5" rx="1"/></g><g fill="#333"><rect x="6.5" y="2.2" width="6" height="0.8"/><rect x="6.5" y="9" width="6" height="0.8"/></g></svg>
<div class="t" style="left:79.6px;top:480.8px;font-size:10.3px;color:#ececec;letter-spacing:0.353px;">Transfer</div>
<svg class="a" style="left:121px;top:485px" width="6" height="4" viewBox="0 0 6 4"><path d="M0 0h6L3 3z" fill="#e0e0e0"/></svg>
<div class="a" style="left:130px;top:477px;width:71px;height:18px;background:linear-gradient(#f5902c,#f8a44c)"></div>
<svg class="a" style="left:133px;top:478px" width="16" height="16" viewBox="0 0 16 16"><defs><linearGradient id="lg" x1="0" y1="0" x2="1" y2="1"><stop offset="0" stop-color="#ffffff"/><stop offset="1" stop-color="#b8c8e8"/></linearGradient></defs><circle cx="6.2" cy="6.2" r="4.6" fill="url(#lg)" stroke="#7c8494" stroke-width="1.1"/><path d="M9.6 9.6L14 14" stroke="#3c4450" stroke-width="1.8" stroke-linecap="round"/></svg>
<div class="t" style="left:151.4px;top:481.4px;font-size:10.3px;color:#fff4e6;letter-spacing:0.349px;">Inventory</div>
<svg class="a" style="left:206px;top:479px" width="12" height="13" viewBox="0 0 12 13"><path d="M3.2 3.5A4.6 4.6 0 1 0 8.8 3.5" fill="none" stroke="#2a9ae6" stroke-width="1.8"/><path d="M6 1v5.5" stroke="#2a9ae6" stroke-width="1.8"/></svg>
<div class="t" style="left:224.3px;top:480.8px;font-size:10.3px;color:#ececec;letter-spacing:0.187px;">Cancel</div>
<svg class="a" style="left:266.5px;top:480.8px" width="14" height="11" viewBox="0 0 14 11"><g fill="none" stroke="#3aa8f0" stroke-width="2.2"><path d="M1.6 5.6C2 2.6 5 1.2 8 1.8C9 2 9.8 2.4 10.4 3"/><path d="M12.4 5.2C12 8.2 9 9.6 6 9C5 8.8 4.2 8.4 3.6 7.8"/></g><path d="M13.2 0.2V5H8.4z" fill="#3aa8f0"/><path d="M0.8 10.6V5.8H5.6z" fill="#3aa8f0"/></svg>
<div class="t" style="left:284.5px;top:480.8px;font-size:10.3px;color:#ececec;letter-spacing:0.612px;">Refresh</div>
<svg class="a" style="left:334px;top:480.4px" width="14" height="11" viewBox="0 0 14 11"><rect x="0.3" y="0.8" width="11.5" height="9.8" rx="1" fill="#9a48bc"/><rect x="2" y="1.6" width="7.5" height="3.6" fill="#e4dcee"/><rect x="3.5" y="6.8" width="4.5" height="3" fill="#c8b8d8"/><rect x="4.5" y="7.3" width="1.5" height="2" fill="#7a5a90"/><path d="M6.5 2.2h5.5" stroke="#40a8f8" stroke-width="1.4"/><path d="M10.6 0.2L13.4 2.2L10.6 4.2z" fill="#40a8f8"/></svg>
<div class="t" style="left:351.7px;top:480.8px;font-size:10.3px;color:#ececec;letter-spacing:0.300px;">Export</div>
<svg class="a" style="left:390px;top:485px" width="6" height="4" viewBox="0 0 6 4"><path d="M0 0h6L3 3z" fill="#e0e0e0"/></svg>
<svg class="a" style="left:403px;top:479.5px" width="13" height="12" viewBox="0 0 13 12"><rect x="2.2" y="0.5" width="8" height="4" rx="0.8" fill="#e4f4f0"/><rect x="0.2" y="4.3" width="12.6" height="5.5" rx="1.6" fill="#d8d8dc"/><rect x="2.2" y="5.6" width="8.6" height="3" fill="#505058"/><rect x="2.6" y="9.4" width="7.8" height="2" fill="#60a8e8"/><rect x="5.5" y="9.4" width="2" height="2" fill="#40a060"/></svg>
<div class="t" style="left:420.7px;top:480.8px;font-size:10.3px;color:#ececec;letter-spacing:0.547px;">Print</div>
<svg class="a" style="left:454px;top:481px" width="13" height="11" viewBox="0 0 13 11"><defs><linearGradient id="rg454" x1="0" y1="0" x2="0" y2="1"><stop offset="0" stop-color="#e83030"/><stop offset="1" stop-color="#b01010"/></linearGradient></defs><rect x="0.3" y="0.3" width="12.2" height="10.2" rx="2" fill="url(#rg454)" stroke="#901010" stroke-width="0.6"/><path d="M3.8 2.6l5.2 5.6M9 2.6L3.8 8.2" stroke="#fff" stroke-width="2"/></svg>
<div class="t" style="left:471px;top:480.8px;font-size:10.3px;color:#ececec;letter-spacing:0.800px;">Close</div>
<div class="a" style="left:0px;top:498px;width:941px;height:16px;background:linear-gradient(#3e424b 0,#3e424b 4px,#3a3a3a 5.5px,#3a3a3a 100%)"></div>
<div class="a" style="left:31.4px;top:503.8px;width:1.1px;height:9px;background:#d8d8d8"></div>
<div class="a" style="left:93.8px;top:503.8px;width:1.1px;height:9px;background:#d8d8d8"></div>
<div class="a" style="left:141.5px;top:503.8px;width:1.1px;height:9px;background:#d8d8d8"></div>
<div class="a" style="left:198.2px;top:503.8px;width:1.1px;height:9px;background:#d8d8d8"></div>
<div class="a" style="left:255.1px;top:503.8px;width:1.1px;height:9px;background:#d8d8d8"></div>
<div class="a" style="left:312.0px;top:503.8px;width:1.1px;height:9px;background:#d8d8d8"></div>
<div class="a" style="left:365.0px;top:503.8px;width:1.1px;height:9px;background:#d8d8d8"></div>
<div class="a" style="left:420.1px;top:503.8px;width:1.1px;height:9px;background:#d8d8d8"></div>
<div class="a" style="left:518.6px;top:503.8px;width:1.1px;height:9px;background:#d8d8d8"></div>
<div class="a" style="left:572.8px;top:503.8px;width:1.1px;height:9px;background:#d8d8d8"></div>
<div class="a" style="left:638.4px;top:503.8px;width:1.1px;height:9px;background:#d8d8d8"></div>
<div class="t" style="left:-100px;width:127.5px;text-align:right;top:502.9px;font-size:9.6px;color:#e6e6e6;letter-spacing:0.3px">F4: Edit</div>
<div class="t" style="left:36.7px;top:502.9px;font-size:9.6px;color:#e6e6e6;letter-spacing:0.222px;">F5: Refresh</div>
<div class="t" style="left:98.9px;top:502.9px;font-size:9.6px;color:#e6e6e6;letter-spacing:0.154px;">F6: View</div>
<div class="t" style="left:146.4px;top:502.9px;font-size:9.6px;color:#e6e6e6;letter-spacing:0.286px;">F7: Delete</div>
<div class="t" style="left:202.5px;top:502.9px;font-size:9.6px;color:#e6e6e6;letter-spacing:0.417px;">F8: Import</div>
<div class="t" style="left:260.2px;top:502.9px;font-size:9.6px;color:#e6e6e6;letter-spacing:0.223px;">F9: Export</div>
<div class="t" style="left:316.3px;top:502.9px;font-size:9.6px;color:#e6e6e6;letter-spacing:0.197px;">F10: Print</div>
<div class="t" style="left:369.6px;top:502.9px;font-size:9.6px;color:#e6e6e6;letter-spacing:0.315px;">F11: Save</div>
<div class="t" style="left:424.4px;top:502.9px;font-size:9.6px;color:#e6e6e6;letter-spacing:0.321px;">F12: Save and next</div>
<div class="t" style="left:522.9px;top:502.9px;font-size:9.6px;color:#e6e6e6;letter-spacing:-0.091px;">Esc: Close</div>
<div class="t" style="left:589.6px;top:502.9px;font-size:9.6px;color:#e6e6e6;letter-spacing:0.127px;">: Previous</div>
<div class="t" style="left:655px;top:502.9px;font-size:9.6px;color:#e6e6e6;letter-spacing:0.322px;">: Next</div>
<svg class="a" style="left:578px;top:504.5px" width="11" height="7" viewBox="0 0 11 7"><path d="M10.5 3.5H1.5M4 1L1.2 3.5L4 6" fill="none" stroke="#e6e6e6" stroke-width="1"/></svg>
<svg class="a" style="left:643px;top:504.5px" width="11" height="7" viewBox="0 0 11 7"><path d="M0.5 3.5H9.5M7 1L9.8 3.5L7 6" fill="none" stroke="#e6e6e6" stroke-width="1"/></svg>
<div class="a" style="left:0px;top:514px;width:941px;height:11px;background:linear-gradient(#383838 0,#3a3a3a 1px,#40444d 2px,#42464f 100%)"></div>
<div class="a" style="left:0;top:514px;width:941px;height:11px;overflow:hidden">
<div class="t" style="left:-24px;top:7.5px;font-size:10px;color:#dcdcdc;">Systems Co., Ltd. 2013</div>
<div class="t" style="left:483px;top:7.5px;font-size:10px;color:#dcdcdc;">BOBAMTEK VN Co., Ltd</div>
</div></body></html>
